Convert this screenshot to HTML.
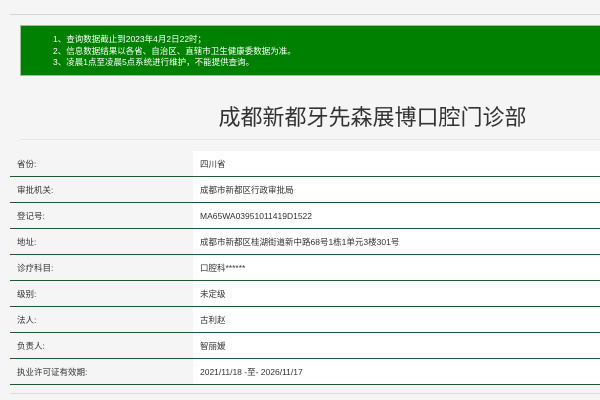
<!DOCTYPE html>
<html><head><meta charset="utf-8"><style>
body{margin:0;width:600px;height:400px;background:#f5f5f5;font-family:"Liberation Sans","Noto Sans CJK SC",sans-serif;overflow:hidden;position:relative}
.top{position:absolute;left:10px;right:0;top:14px;border-top:1px solid #d5d5d5}
.green{position:absolute;left:20px;top:25px;width:600px;height:51px;background:#008000;border:1px solid #9bbf9b;box-sizing:border-box;color:#fff;font-size:8.5px;line-height:11.5px;padding:8px 0 0 32px}
h1{position:absolute;left:0;width:745px;text-align:center;top:100px;margin:0;font-weight:normal;font-size:22px;color:#333}
.tl{position:absolute;left:20px;right:0;top:139px;border-top:1px solid #e6e6e6}
table{position:absolute;left:10px;top:151px;width:590px;border-collapse:collapse;font-size:8.5px;color:#333}
td{height:25px;border-bottom:1px solid #1e5a32;padding:0}
td.l{width:183px;padding-left:7px;box-sizing:border-box}
td.r{background:#fff;padding-left:7px}
.bl{position:absolute;left:10px;right:0;top:393px;border-top:1px solid #ddd}
</style></head><body>
<div class="top"></div>
<div class="green">1、查询数据截止到2023年4月2日22时；<br>2、信息数据结果以各省、自治区、直辖市卫生健康委数据为准。<br>3、凌晨1点至凌晨5点系统进行维护，不能提供查询。</div>
<h1>成都新都牙先森展博口腔门诊部</h1>
<div class="tl"></div>
<table>
<tr><td class="l">省份:</td><td class="r">四川省</td></tr>
<tr><td class="l">审批机关:</td><td class="r">成都市新都区行政审批局</td></tr>
<tr><td class="l">登记号:</td><td class="r">MA65WA03951011419D1522</td></tr>
<tr><td class="l">地址:</td><td class="r">成都市新都区桂湖街道新中路68号1栋1单元3楼301号</td></tr>
<tr><td class="l">诊疗科目:</td><td class="r">口腔科******</td></tr>
<tr><td class="l">级别:</td><td class="r">未定级</td></tr>
<tr><td class="l">法人:</td><td class="r">古利赵</td></tr>
<tr><td class="l">负责人:</td><td class="r">智丽嫒</td></tr>
<tr><td class="l">执业许可证有效期:</td><td class="r">2021/11/18 -至- 2026/11/17</td></tr>
</table>
<div class="bl"></div>
</body></html>
